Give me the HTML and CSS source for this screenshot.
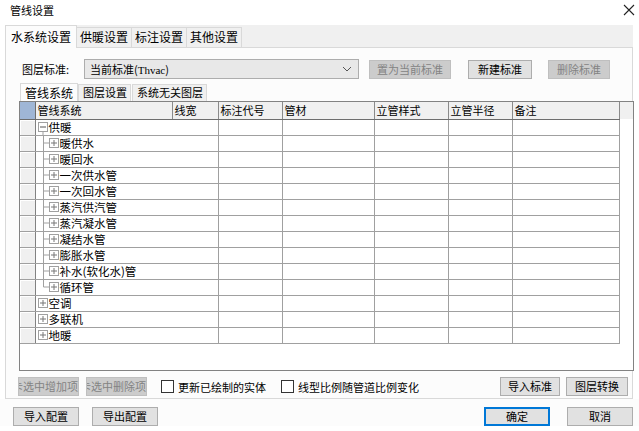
FILE: index.html
```html
<!DOCTYPE html>
<html lang="zh">
<head>
<meta charset="utf-8">
<title>管线设置</title>
<link rel="stylesheet" href="styles.css">
</head>
<body>
<div class="dialog">
  <div class="titlebar">
    <span class="title">管线设置</span>
    <svg class="close" width="12" height="12" viewBox="0 0 12 12"><path d="M1 1L11 11M11 1L1 11" stroke="#222" stroke-width="1.1"/></svg>
  </div>
  <div class="tabstrip">
    <div class="tab active">水系统设置</div>
    <div class="tab">供暖设置</div>
    <div class="tab">标注设置</div>
    <div class="tab">其他设置</div>
  </div>
  <div class="panel">
    <div class="layer-row">
      <span class="label">图层标准:</span>
      <div class="combo"><span>当前标准(<span class="latin">Thvac</span>)</span>
        <svg width="10" height="6" viewBox="0 0 10 6"><path d="M1 1L5 5L9 1" fill="none" stroke="#555" stroke-width="1"/></svg>
      </div>
      <button class="btn dis b1">置为当前标准</button>
      <button class="btn b2">新建标准</button>
      <button class="btn dis b3">删除标准</button>
    </div>
    <div class="subtabs">
      <div class="subtab active">管线系统</div>
      <div class="subtab">图层设置</div>
      <div class="subtab">系统无关图层</div>
    </div>
    <div class="grid">
      <table>
        <colgroup>
          <col style="width:15px"><col style="width:137px"><col style="width:46px"><col style="width:64px"><col style="width:92px"><col style="width:74px"><col style="width:64px"><col style="width:107px">
        </colgroup>
        <thead>
          <tr><th class="corner"></th><th>管线系统</th><th>线宽</th><th>标注代号</th><th>管材</th><th>立管样式</th><th>立管半径</th><th>备注</th></tr>
        </thead>
        <tbody>
          <tr><td class="rh"></td><td class="tree"><svg class="tg" width="24" height="16" viewBox="0 0 24 16"><rect x="2.5" y="3.5" width="9" height="9" fill="#fff" stroke="#a0a0a0"/><path d="M4 8H10" stroke="#555"/><path d="M7 12.5V16" stroke="#a0a0a0"/></svg><span class="t0">供暖</span></td><td></td><td></td><td></td><td></td><td></td><td></td></tr>
          <tr><td class="rh"></td><td class="tree"><svg class="tg" width="24" height="16" viewBox="0 0 24 16"><path d="M7.5 0V16M7.5 8H13" stroke="#a0a0a0"/><rect x="13.5" y="3.5" width="9" height="9" fill="#fff" stroke="#a0a0a0"/><path d="M15 8H21M18 5V11" stroke="#777"/></svg><span>暖供水</span></td><td></td><td></td><td></td><td></td><td></td><td></td></tr>
          <tr><td class="rh"></td><td class="tree"><svg class="tg" width="24" height="16" viewBox="0 0 24 16"><path d="M7.5 0V16M7.5 8H13" stroke="#a0a0a0"/><rect x="13.5" y="3.5" width="9" height="9" fill="#fff" stroke="#a0a0a0"/><path d="M15 8H21M18 5V11" stroke="#777"/></svg><span>暖回水</span></td><td></td><td></td><td></td><td></td><td></td><td></td></tr>
          <tr><td class="rh"></td><td class="tree"><svg class="tg" width="24" height="16" viewBox="0 0 24 16"><path d="M7.5 0V16M7.5 8H13" stroke="#a0a0a0"/><rect x="13.5" y="3.5" width="9" height="9" fill="#fff" stroke="#a0a0a0"/><path d="M15 8H21M18 5V11" stroke="#777"/></svg><span>一次供水管</span></td><td></td><td></td><td></td><td></td><td></td><td></td></tr>
          <tr><td class="rh"></td><td class="tree"><svg class="tg" width="24" height="16" viewBox="0 0 24 16"><path d="M7.5 0V16M7.5 8H13" stroke="#a0a0a0"/><rect x="13.5" y="3.5" width="9" height="9" fill="#fff" stroke="#a0a0a0"/><path d="M15 8H21M18 5V11" stroke="#777"/></svg><span>一次回水管</span></td><td></td><td></td><td></td><td></td><td></td><td></td></tr>
          <tr><td class="rh"></td><td class="tree"><svg class="tg" width="24" height="16" viewBox="0 0 24 16"><path d="M7.5 0V16M7.5 8H13" stroke="#a0a0a0"/><rect x="13.5" y="3.5" width="9" height="9" fill="#fff" stroke="#a0a0a0"/><path d="M15 8H21M18 5V11" stroke="#777"/></svg><span>蒸汽供汽管</span></td><td></td><td></td><td></td><td></td><td></td><td></td></tr>
          <tr><td class="rh"></td><td class="tree"><svg class="tg" width="24" height="16" viewBox="0 0 24 16"><path d="M7.5 0V16M7.5 8H13" stroke="#a0a0a0"/><rect x="13.5" y="3.5" width="9" height="9" fill="#fff" stroke="#a0a0a0"/><path d="M15 8H21M18 5V11" stroke="#777"/></svg><span>蒸汽凝水管</span></td><td></td><td></td><td></td><td></td><td></td><td></td></tr>
          <tr><td class="rh"></td><td class="tree"><svg class="tg" width="24" height="16" viewBox="0 0 24 16"><path d="M7.5 0V16M7.5 8H13" stroke="#a0a0a0"/><rect x="13.5" y="3.5" width="9" height="9" fill="#fff" stroke="#a0a0a0"/><path d="M15 8H21M18 5V11" stroke="#777"/></svg><span>凝结水管</span></td><td></td><td></td><td></td><td></td><td></td><td></td></tr>
          <tr><td class="rh"></td><td class="tree"><svg class="tg" width="24" height="16" viewBox="0 0 24 16"><path d="M7.5 0V16M7.5 8H13" stroke="#a0a0a0"/><rect x="13.5" y="3.5" width="9" height="9" fill="#fff" stroke="#a0a0a0"/><path d="M15 8H21M18 5V11" stroke="#777"/></svg><span>膨胀水管</span></td><td></td><td></td><td></td><td></td><td></td><td></td></tr>
          <tr><td class="rh"></td><td class="tree"><svg class="tg" width="24" height="16" viewBox="0 0 24 16"><path d="M7.5 0V16M7.5 8H13" stroke="#a0a0a0"/><rect x="13.5" y="3.5" width="9" height="9" fill="#fff" stroke="#a0a0a0"/><path d="M15 8H21M18 5V11" stroke="#777"/></svg><span>补水(软化水)管</span></td><td></td><td></td><td></td><td></td><td></td><td></td></tr>
          <tr><td class="rh"></td><td class="tree"><svg class="tg" width="24" height="16" viewBox="0 0 24 16"><path d="M7.5 0V8H13" fill="none" stroke="#a0a0a0"/><rect x="13.5" y="3.5" width="9" height="9" fill="#fff" stroke="#a0a0a0"/><path d="M15 8H21M18 5V11" stroke="#777"/></svg><span>循环管</span></td><td></td><td></td><td></td><td></td><td></td><td></td></tr>
          <tr><td class="rh"></td><td class="tree"><svg class="tg" width="24" height="16" viewBox="0 0 24 16"><rect x="2.5" y="3.5" width="9" height="9" fill="#fff" stroke="#a0a0a0"/><path d="M4 8H10M7 5V11" stroke="#777"/></svg><span class="t0">空调</span></td><td></td><td></td><td></td><td></td><td></td><td></td></tr>
          <tr><td class="rh"></td><td class="tree"><svg class="tg" width="24" height="16" viewBox="0 0 24 16"><rect x="2.5" y="3.5" width="9" height="9" fill="#fff" stroke="#a0a0a0"/><path d="M4 8H10M7 5V11" stroke="#777"/></svg><span class="t0">多联机</span></td><td></td><td></td><td></td><td></td><td></td><td></td></tr>
          <tr><td class="rh"></td><td class="tree"><svg class="tg" width="24" height="16" viewBox="0 0 24 16"><rect x="2.5" y="3.5" width="9" height="9" fill="#fff" stroke="#a0a0a0"/><path d="M4 8H10M7 5V11" stroke="#777"/></svg><span class="t0">地暖</span></td><td></td><td></td><td></td><td></td><td></td><td></td></tr>
        </tbody>
      </table>
    </div>
    <div class="panel-foot">
      <button class="btn dis clip"><span>卡选中增加项</span></button>
      <button class="btn dis clip"><span>卡选中删除项</span></button>
      <label class="chk"><span class="box"></span>更新已绘制的实体</label>
      <label class="chk"><span class="box"></span>线型比例随管道比例变化</label>
      <span class="spacer"></span>
      <button class="btn f1">导入标准</button>
      <button class="btn f2">图层转换</button>
    </div>
  </div>
  <div class="footer">
    <button class="btn ft">导入配置</button>
    <button class="btn ft">导出配置</button>
    <span class="spacer"></span>
    <button class="btn ft ok">确定</button>
    <button class="btn ft">取消</button>
  </div>
</div>
</body>
</html>
```

FILE: styles.css
```css
* { box-sizing: border-box; }
html, body { margin: 0; padding: 0; }
body {
  width: 639px;
  height: 431px;
  overflow: hidden;
  background: #ffffff;
  font-family: "Noto Sans CJK SC", "Microsoft YaHei", sans-serif;
  font-size: 11px;
  color: #000;
}
.dialog { width: 639px; height: 431px; display: flex; flex-direction: column; }
.titlebar {
  height: 25px;
  display: flex;
  align-items: center;
  justify-content: space-between;
  padding: 0 4px 5px 10px;
}
.title { font-size: 11px; line-height: 14px; }

.tabstrip {
  margin: 0 6px 0 5px;
  height: 22px;
  background: #f0f0f0;
  display: flex;
  align-items: flex-end;
  padding-left: 1px;
  position: relative;
  z-index: 1;
}
.tab {
  height: 20px;
  padding: 0 3px;
  line-height: 18px;
  font-size: 12px;
  border: 1px solid #d9d9d9;
  border-bottom: none;
  background: #f0f0f0;
  margin-left: -1px;
  white-space: nowrap;
}
.tab.active {
  height: 23px;
  background: #fcfcfc;
  margin-bottom: -1px;
  padding: 0 5px;
  line-height: 21px;
  position: relative;
  z-index: 2;
}

.panel {
  margin: 0 6px 0 5px;
  height: 352px;
  border: 1px solid #d9d9d9;
  background: #fcfcfc;
  display: flex;
  flex-direction: column;
  padding: 11px 0 0 12px;
}
.layer-row { display: flex; align-items: center; height: 20px; }
.label { width: 66px; padding-left: 4px; }
.latin { font-family: "Liberation Serif", serif; font-size: 11px; }
.combo {
  width: 275px;
  height: 20px;
  border: 1px solid #adadad;
  background: #e8e8e8;
  display: flex;
  align-items: center;
  justify-content: space-between;
  padding: 0 6px 0 5px;
}
.btn {
  font-family: "Noto Sans CJK SC", "Microsoft YaHei", sans-serif;
  font-size: 11px;
  height: 19px;
  padding: 0;
  line-height: 17px;
  border: 1px solid #adadad;
  background: #e1e1e1;
  color: #000;
  text-align: center;
}
.btn.dis { border-color: #bfbfbf; background: #cccccc; color: #838383; }
.b1 { width: 82px; margin-left: 10px; }
.b2 { width: 64px; margin-left: 17px; }
.b3 { width: 62px; margin-left: 16px; }

.subtabs { display: flex; margin-top: 4px; height: 18px; align-items: flex-end; padding-left: 2px; gap: 1px; }
.subtab {
  height: 17px;
  line-height: 15px;
  padding: 0 3px 0 4px;
  border: 1px solid #d9d9d9;
  border-bottom: none;
  background: #f0f0f0;
}
.subtab.active { height: 19px; background: #fcfcfc; margin-bottom: -1px; padding: 0 4px; line-height: 17px; font-size: 12px; margin-right: -1px; }

.grid {
  width: 615px;
  height: 270px;
  margin-left: 1px;
  border: 1px solid #828282;
  background: #ffffff;
  position: relative;
}
.grid::before {
  content: "";
  position: absolute;
  left: 0; right: 0; top: 0;
  height: 17px;
  background: #f0f0f0;
}
table {
  position: relative;
  border-collapse: collapse;
  table-layout: fixed;
  width: 599px;
}
th {
  height: 17px;
  padding: 0 0 0 2px;
  font-weight: normal;
  text-align: left;
  background: #f0f0f0;
  border-right: 1px solid #8a8a8a;
  border-bottom: 1px solid #6d6d6d;
  line-height: 15px;
  white-space: nowrap;
  overflow: hidden;
}
th.corner { background: #9fb6d6; border-right: 1px solid #6d6d6d; }
td {
  height: 16px;
  padding: 0;
  border-right: 1px solid #a0a0a0;
  border-bottom: 1px solid #a0a0a0;
  line-height: 15px;
  white-space: nowrap;
}
td.rh { background: #f0f0f0; border-right: 1px solid #828282; border-bottom: 1px solid #a0a0a0; box-shadow: inset 1px 1px 0 #fff; }
td.tree { display: flex; align-items: center; height: 16px; border-right: none; font-size: 11.5px; }
td.tree span.t0 { margin-left: -11px; }
.tg { display: block; flex: none; }

.panel-foot {
  display: flex;
  align-items: center;
  margin-top: 6px;
  height: 19px;
  padding-right: 4px;
}
.btn.clip { width: 61px; overflow: hidden; position: relative; margin-left: 0; }
.btn.clip + .btn.clip { margin-left: 7px; }
.btn.clip span { position: absolute; right: 0; top: 0; white-space: nowrap; }
.chk { display: flex; align-items: center; margin-left: 14px; }
.chk + .chk { margin-left: 15px; }
.chk .box { width: 13px; height: 13px; border: 1px solid #333; background: #fff; margin-right: 4px; }
.spacer { flex: 1; }
.f1 { width: 60px; }
.f2 { width: 62px; margin-left: 6px; }

.footer {
  display: flex;
  align-items: center;
  padding: 8px 6px 0 13px;
  background: #fcfcfc;
}
.btn.ft { width: 66px; height: 19px; }
.btn.ft + .btn.ft { margin-left: 13px; }
.btn.ok { border: 2px solid #0078d7; line-height: 15px; margin-right: 4px; }
.footer .spacer + .btn.ft { margin-left: 0; }
```
